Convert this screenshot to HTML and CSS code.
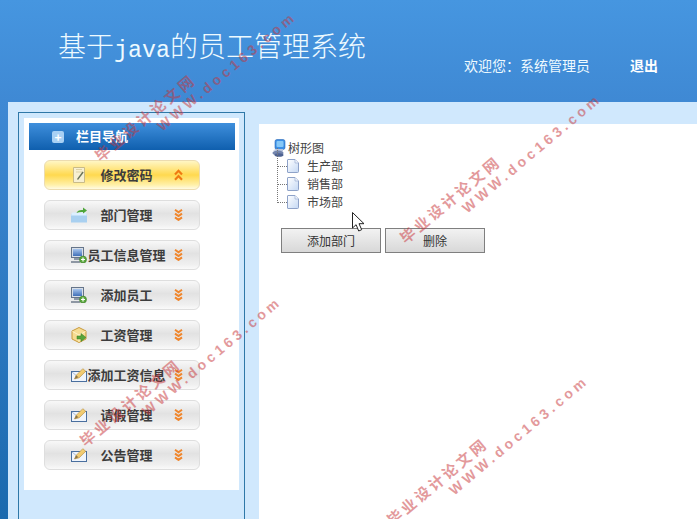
FILE: index.html
```html
<!DOCTYPE html>
<html lang="zh-CN">
<head>
<meta charset="utf-8">
<title>基于java的员工管理系统</title>
<link rel="stylesheet" href="styles.css">
</head>
<body>
<svg class="defs" width="0" height="0" aria-hidden="true">
  <defs>
    <linearGradient id="screen" x1="0" y1="0" x2="0" y2="1"><stop offset="0" stop-color="#a9c6ee"/><stop offset="1" stop-color="#3f6fb8"/></linearGradient>
    <linearGradient id="sheet" x1="0" y1="0" x2="1" y2="1"><stop offset="0" stop-color="#ffffff"/><stop offset="1" stop-color="#c4d8f4"/></linearGradient>
    <linearGradient id="pencil" x1="0" y1="0" x2="1" y2="1"><stop offset="0" stop-color="#fbe08c"/><stop offset="1" stop-color="#e8b858"/></linearGradient>
    <symbol id="chev-down" viewBox="0 0 9 12"><path d="M1 .8 4.500 3.300 8 .8M1 4.600 4.500 7.100 8 4.600M1 8.400 4.500 10.900 8 8.400" fill="none" stroke="#f0862c" stroke-width="2"/></symbol>
    <symbol id="chev-up" viewBox="0 0 9 12"><path d="M1 5.500 4.500 1.800 8 5.500M1 10.800 4.500 7.100 8 10.800" fill="none" stroke="#ef7a12" stroke-width="2.200"/></symbol>
    <symbol id="mail-pen" viewBox="0 0 16 14"><rect x="0.500" y="3.500" width="15" height="10" fill="#f0f5fc" stroke="#4a6f9f"/><path d="M1 4l6 5" stroke="#a9bcd8" fill="none"/><path d="M3.500 11 5.200 7.300 11.800 .7l3 2.600-6.600 6.500z" fill="url(#pencil)" stroke="#b48a3c" stroke-width=".6"/><path d="M3.500 11 5.200 7.300 7.300 9.300z" fill="#8a7448"/></symbol>
    <symbol id="monitor" viewBox="0 0 16 16"><rect x="0.500" y="0.500" width="12" height="10" fill="#d8dfe8" stroke="#66758a"/><rect x="2" y="2" width="9" height="7" fill="url(#screen)"/><rect x="3" y="11" width="7" height="2" fill="#8d99a8"/><path d="M0 15h9" stroke="#6f7b8b" stroke-width="1.500"/><circle cx="12" cy="12.500" r="3.500" fill="#5aa83c" stroke="#3c7f28" stroke-width=".6"/><path d="M12 10.500v4M10 12.500h4" stroke="#fff" stroke-width="1.200"/></symbol>
    <symbol id="page" viewBox="0 0 12 14"><path d="M1 .5H8L11.500 4V12.500Q11.500 13.500 10.500 13.500H1Q.5 13.500.5 13V1Q.5.500 1 .5z" fill="url(#sheet)" stroke="#8ea2c8"/><path d="M8 .5V4h3.500" fill="#eef4fc" stroke="#9db0d2" stroke-width=".7"/></symbol>
  </defs>
</svg>

<header class="topbar">
  <h1 class="brand">基于<span class="latin">java</span>的员工管理系统</h1>
  <div class="userbox">
    <span class="welcome">欢迎您&#xFF1A;系统管理员</span>
    <a class="logout" href="#">退出</a>
  </div>
</header>

<div class="shell">
  <aside class="sidebar">
    <div class="panel">
      <div class="panel-title">
        <span class="plus">+</span>
        <span class="title-text">栏目导航</span>
      </div>
      <ul class="menu">
        <li class="item active">
          <svg class="item-icon" viewBox="0 0 16 16"><path d="M2.500.5h11v15h-11z" fill="#f7f0d2" stroke="#c9bb88"/><path d="M5 2.500h6M5 5h6" stroke="#ddd2a5"/><path d="M6 12 11.500 4.500l1.200 1L7 13z" fill="#6a7358"/></svg>
          <span class="item-text">修改密码</span>
          <svg class="chev"><use href="#chev-up"/></svg>
        </li>
        <li class="item">
          <svg class="item-icon" viewBox="0 0 16 16"><path d="M0 7h16v8.500H0z" fill="#a9d0f0"/><path d="M1 5.500h14l1 3H0z" fill="#dcefff"/><path d="M5.500 6C6.500 3.500 9 2.500 12 3V.5l4 3-4 3V5C9.500 4.800 7.500 5 5.500 6z" fill="#4ea63a"/></svg>
          <span class="item-text">部门管理</span>
          <svg class="chev"><use href="#chev-down"/></svg>
        </li>
        <li class="item">
          <svg class="item-icon"><use href="#monitor"/></svg>
          <span class="item-text">员工信息管理</span>
          <svg class="chev"><use href="#chev-down"/></svg>
        </li>
        <li class="item">
          <svg class="item-icon"><use href="#monitor"/></svg>
          <span class="item-text">添加员工</span>
          <svg class="chev"><use href="#chev-down"/></svg>
        </li>
        <li class="item">
          <svg class="item-icon" viewBox="0 0 16 16"><path d="M8 .5 15 4v8l-7 3.500L1 12V4z" fill="#f6dc92" stroke="#c99a3c"/><path d="M1.500 4.500 8 8l6.500-3.500M8 8v7" stroke="#fff3c8" fill="none"/><path d="M6 9h4V6.500l5 4-5 4V12H6z" fill="#58a53a" stroke="#3b7d26" stroke-width=".5"/></svg>
          <span class="item-text">工资管理</span>
          <svg class="chev"><use href="#chev-down"/></svg>
        </li>
        <li class="item">
          <svg class="item-icon"><use href="#mail-pen"/></svg>
          <span class="item-text">添加工资信息</span>
          <svg class="chev"><use href="#chev-down"/></svg>
        </li>
        <li class="item">
          <svg class="item-icon"><use href="#mail-pen"/></svg>
          <span class="item-text">请假管理</span>
          <svg class="chev"><use href="#chev-down"/></svg>
        </li>
        <li class="item">
          <svg class="item-icon"><use href="#mail-pen"/></svg>
          <span class="item-text">公告管理</span>
          <svg class="chev"><use href="#chev-down"/></svg>
        </li>
      </ul>
    </div>
  </aside>

  <main class="content">
    <div class="tree-root">
      <svg class="root-icon" viewBox="0 0 14 18"><rect x="3" y="0.500" width="10" height="10" rx="2" fill="#3c8fe6" stroke="#2a6ab8" stroke-width=".6"/><rect x="4.500" y="2" width="7" height="6" rx="1" fill="#86c8f8"/><path d="M1 11.500 4 10h7v2.500z" fill="#b8c4dc"/><ellipse cx="6" cy="14" rx="5.500" ry="2.500" fill="#7486ae"/><ellipse cx="7" cy="16" rx="4.500" ry="1.800" fill="#4f6392"/></svg>
      <span class="root-label">树形图</span>
    </div>
    <ul class="tree">
      <li class="node"><svg class="doc"><use href="#page"/></svg><span class="node-label">生产部</span></li>
      <li class="node"><svg class="doc"><use href="#page"/></svg><span class="node-label">销售部</span></li>
      <li class="node"><svg class="doc"><use href="#page"/></svg><span class="node-label">市场部</span></li>
    </ul>
    <div class="actions">
      <button class="btn" type="button">添加部门</button>
      <button class="btn" type="button">删除</button>
    </div>
  </main>
</div>

<svg class="cursor" viewBox="0 0 13 20"><path d="M.5.500V16l3.600-3.300L6.700 19l3-1.300-2.700-6h5z" fill="#fff" stroke="#222" stroke-width="1"/></svg>

<div class="mark mark-a"><div class="mark-cn">毕业设计论文网</div><div class="mark-en">WWW.doc163.com</div></div>
<div class="mark mark-b"><div class="mark-cn">毕业设计论文网</div><div class="mark-en">WWW.doc163.com</div></div>
<div class="mark mark-c"><div class="mark-cn">毕业设计论文网</div><div class="mark-en">WWW.doc163.com</div></div>
<div class="mark mark-d"><div class="mark-cn">毕业设计论文网</div><div class="mark-en">WWW.doc163.com</div></div>
</body>
</html>
```
FILE: styles.css
```css
* { box-sizing: border-box; }
html, body { margin: 0; padding: 0; }
body {
  position: relative;
  width: 697px;
  height: 519px;
  overflow: hidden;
  display: flex;
  flex-direction: column;
  background: linear-gradient(#4696e0 0, #3f89d4 100px, #1a69ae 100%);
  font-family: "Noto Sans CJK SC", "Liberation Sans", sans-serif;
  font-size: 12px;
  color: #333;
}
.defs { position: absolute; }
ul { list-style: none; margin: 0; padding: 0; }

.topbar {
  flex: 0 0 102px;
  display: flex;
  justify-content: space-between;
  padding-left: 58px;
  color: #eefaff;
}
.brand {
  margin: 25px 0 0;
  font-size: 28px;
  line-height: 40px;
  font-weight: 300;
  white-space: nowrap;
}
.latin { font-family: "Liberation Mono", monospace; font-size: 23.300px; }
.userbox {
  display: flex;
  gap: 40px;
  margin: 55px 39px 0 0;
  font-size: 14px;
  line-height: 20px;
  height: 20px;
}
.logout { color: #fff; font-weight: 700; text-decoration: none; }

.shell {
  flex: 1;
  display: flex;
  margin-left: 8px;
  padding: 10px 0 0 10px;
  background: #d0e8fd;
  min-height: 0;
}
.sidebar {
  flex: 0 0 227px;
  padding: 5px;
  border: 1px solid #2f78a8;
  border-bottom: 0;
  background: #d0e8fd;
  margin-right: 14px;
}
.panel {
  height: 372px;
  padding: 5px 4px 0 5px;
  background: #fff;
  width: 215px;
}
.panel-title {
  display: flex;
  align-items: center;
  gap: 12px;
  height: 27px;
  padding-left: 23px;
  background: linear-gradient(#3f8fdc, #0f5fae);
  color: #fff;
  font-size: 13px;
  font-weight: 700;
}
.title-text { padding-bottom: 2px; }
.plus {
  width: 12px;
  height: 12px;
  border-radius: 2px;
  background: #a8d0f4;
  color: #fff;
  font-size: 12px;
  line-height: 12px;
  text-align: center;
}
.menu {
  display: flex;
  flex-direction: column;
  gap: 10px;
  margin: 10px 0 0 15px;
}
.item {
  display: flex;
  align-items: center;
  width: 156px;
  height: 30px;
  padding-left: 26px;
  border: 1px solid #dedede;
  border-radius: 6px;
  background: linear-gradient(#f8f8f8, #e2e2e2 45%, #f0f0f0 85%, #fafafa);
  font-size: 13px;
  font-weight: 700;
  color: #3c3c3c;
}
.item.active {
  border-color: #ecdcb0;
  background: linear-gradient(#fff6c4, #ffd94f 50%, #fff0a8 85%, #fffbe4);
}
.item-icon { flex: 0 0 16px; width: 16px; height: 16px; }
.item-text { flex: 0 0 79px; padding-bottom: 2px; text-align: center; white-space: nowrap; }
.chev { flex: 0 0 9px; width: 9px; height: 12px; margin-left: 8px; }

.content {
  flex: 1;
  margin-top: 12px;
  padding: 15px 0 0 13px;
  background: #fff;
  color: #444;
}
.tree-root { display: flex; align-items: center; gap: 2px; height: 18px; }
.root-label { padding-bottom: 1px; }
.root-icon { width: 14px; height: 18px; }
.tree { margin-left: 5px; }
.node {
  position: relative;
  display: flex;
  align-items: center;
  height: 18px;
  padding-left: 10px;
  gap: 8px;
}
.node-label { padding-bottom: 2px; }
.node::before {
  content: "";
  position: absolute;
  left: 0;
  top: -9px;
  width: 9px;
  height: 18px;
  border-left: 1px dotted #777;
  border-bottom: 1px dotted #777;
}
.doc { width: 12px; height: 14px; }
.actions { display: flex; gap: 4px; margin: 17px 0 0 9px; }
.btn {
  width: 100px;
  height: 25px;
  padding: 0;
  border: 1px solid #7f7f7f;
  background: linear-gradient(#f2f2f2, #d8d8d8);
  font: inherit;
  color: #333;
}

.cursor { position: absolute; left: 352px; top: 212px; width: 13px; height: 20px; }

.mark {
  position: absolute;
  transform: rotate(-40deg);
  transform-origin: left top;
  white-space: nowrap;
  opacity: .5;
  color: #c8353a;
  font-weight: 700;
}
.mark-a { left: 91px; top: 151px; }
.mark-b { left: 396px; top: 233px; }
.mark-c { left: 76px; top: 436px; }
.mark-d { left: 383px; top: 515px; }
.mark-cn { font-size: 15px; line-height: 18px; letter-spacing: 3px; }
.mark-en {
  margin-left: 67px;
  font-family: "Liberation Sans", sans-serif;
  font-size: 14px;
  line-height: 16px;
  letter-spacing: 3.800px;
}
```
